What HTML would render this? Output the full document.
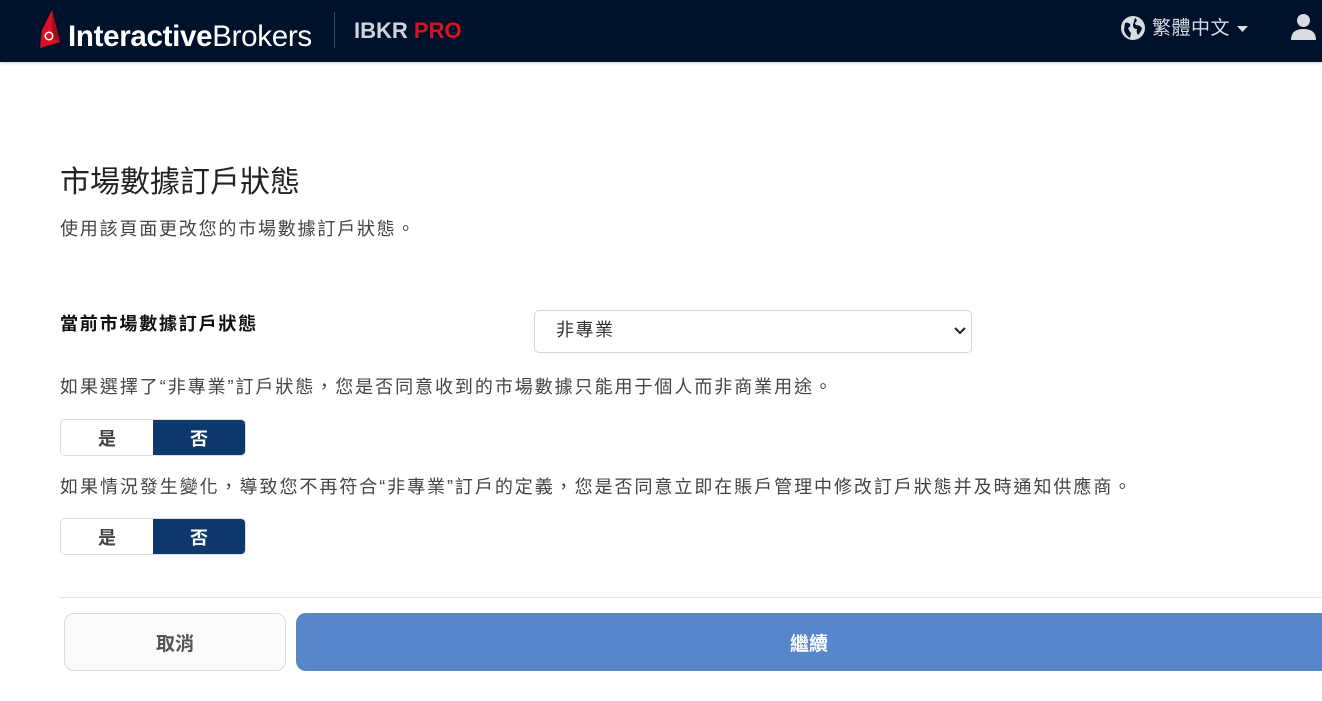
<!DOCTYPE html>
<html><head><meta charset="utf-8"><style>
*{box-sizing:border-box;margin:0;padding:0}
body{width:1322px;height:701px;overflow:hidden;background:#fff;font-family:"Liberation Sans","Noto Sans CJK TC",sans-serif;color:#222;position:relative}
.hdr{position:absolute;left:0;top:0;width:1322px;height:62px;background:#00112b;box-shadow:0 1px 3px rgba(0,0,0,.2)}
.abs{position:absolute}
.t{position:absolute;white-space:nowrap}
.p{font-size:18px;letter-spacing:1.95px;color:#444;line-height:24px}
.tog{position:absolute;left:60px;width:186px;height:37px;border:1px solid #ddd;border-radius:5px;overflow:hidden;display:flex}
.tog div{flex:1;display:flex;align-items:center;justify-content:center;font-weight:bold;font-size:18px;color:#444}
.tog .on{background:#0f386d;color:#fff}
</style></head><body>
<div class="hdr">
<svg class="abs" style="left:40px;top:10px" width="24" height="40" viewBox="0 0 24 40"><polygon points="12,0 20,32 0,38 2,20" fill="#d81222"/><polygon points="12,0 20,32 12,28" fill="#a50d1a"/><circle cx="9" cy="26" r="4.5" fill="#fff"/><circle cx="9" cy="26" r="3" fill="#d81222"/></svg>
<div class="t" style="left:68px;top:18px;font-size:29.5px;color:#fff;letter-spacing:-0.3px;line-height:38px"><b>Interactive</b>Brokers</div>
<div class="abs" style="left:334px;top:12px;width:1px;height:36px;background:#3a4458"></div>
<div class="t" style="left:354px;top:17px;font-size:22px;font-weight:bold;line-height:28px;color:#d0d4da">IBKR <span style="color:#d81222">PRO</span></div>
<svg class="abs" style="left:1120px;top:15px" width="26" height="26" viewBox="0 0 26 26"><circle cx="13" cy="13" r="12" fill="#d8dbe0"/><path d="M5 8 q3-1 5 1 q1 3 -2 4 q1 3 3 5 l-1 5 q-5-3-6-8z M15 3 q3 2 1 4 q-2 1 0 3 q4 0 6 3 q-1 4-4 7 q-2-3-1-6 q-4 0-4-4 q1-4 2-7z" fill="#00112b"/></svg>
<div class="t" style="left:1152px;top:16px;font-size:19px;letter-spacing:0.5px;color:#d8dbe0;line-height:26px">繁體中文</div>
<svg class="abs" style="left:1237px;top:26px" width="12" height="7"><polygon points="0,0 11,0 5.5,6" fill="#d8dbe0"/></svg>
<svg class="abs" style="left:1291px;top:13px" width="25" height="28" viewBox="0 0 25 28"><circle cx="12.5" cy="7.5" r="6.5" fill="#d8dbe0"/><path d="M0 27 q0-11 12.5-11 q12.5 0 12.5 11z" fill="#d8dbe0"/></svg>
</div>
<div class="t" style="left:60px;top:164px;font-size:30px;color:#222;line-height:38px">市場數據訂戶狀態</div>
<div class="t p" style="left:60px;top:217px;letter-spacing:1.8px">使用該頁面更改您的市場數據訂戶狀態。</div>
<div class="t" style="left:60px;top:312px;font-size:18px;letter-spacing:1.8px;font-weight:bold;color:#111;line-height:24px">當前市場數據訂戶狀態</div>
<div class="abs" style="left:534px;top:310px;width:438px;height:43px;border:1px solid #d6d6d6;border-radius:5px"></div>
<div class="t" style="left:556px;top:318px;font-size:18px;letter-spacing:1.5px;color:#333;line-height:24px">非專業</div>
<svg class="abs" style="left:954px;top:327px" width="12" height="8" viewBox="0 0 12 8"><path d="M1 1 l5 5 l5-5" stroke="#222" stroke-width="2" fill="none"/></svg>
<div class="t p" style="left:60px;top:375px">如果選擇了“非專業”訂戶狀態，您是否同意收到的市場數據只能用于個人而非商業用途。</div>
<div class="tog" style="top:419px"><div>是</div><div class="on">否</div></div>
<div class="t p" style="left:60px;top:475px">如果情況發生變化，導致您不再符合“非專業”訂戶的定義，您是否同意立即在賬戶管理中修改訂戶狀態并及時通知供應商。</div>
<div class="tog" style="top:518px"><div>是</div><div class="on">否</div></div>
<div class="abs" style="left:59px;top:597px;width:1263px;height:1px;background:#e3e3e3"></div>
<div class="abs" style="left:64px;top:613px;width:222px;height:58px;border:1px solid #ddd;border-radius:10px;background:#fbfbfb;display:flex;align-items:center;justify-content:center;font-size:19px;font-weight:bold;color:#555">取消</div>
<div class="abs" style="left:296px;top:613px;width:1040px;height:58px;border-radius:10px;background:#5886cb;display:flex;align-items:center;justify-content:center;font-size:19px;font-weight:bold;color:#fff;padding-right:14px">繼續</div>
</body></html>
